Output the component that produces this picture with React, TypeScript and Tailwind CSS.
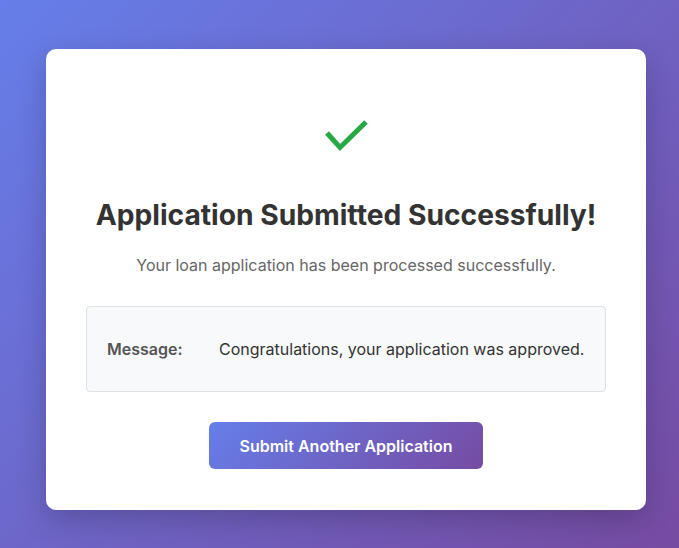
import React from "react";

export default function App() {
  return (
    <div
      className="min-h-[548px] w-full bg-[linear-gradient(135deg,#667eea_0%,#764ba2_100%)] pl-[46px] pt-[49px]"
      style={{ fontFamily: "Inter, 'Noto Sans', sans-serif" }}
    >
      <div className="w-[600px] h-[461px] bg-white rounded-[10px] shadow-[0_10px_30px_rgba(0,0,0,0.2)] px-[40px] pt-[40px] flex flex-col items-center">
        <div className="h-[89px] w-full flex justify-center pt-[31px]">
          <svg width="44" height="34" viewBox="0 0 44 34" className="ml-[2px]">
            <polyline
              points="2,13 15,27.5 41,2"
              fill="none"
              stroke="#28a745"
              strokeWidth="5"
              strokeLinecap="butt"
              strokeLinejoin="miter"
            />
          </svg>
        </div>
        <h1 className="mt-[20px] text-[28.2px] leading-[34px] font-bold text-[#333] text-center">
          Application Submitted Successfully!
        </h1>
        <p className="mt-[21px] text-[16px] leading-[24px] text-[#666] text-center">
          Your loan application has been processed successfully.
        </p>
        <div className="mt-[29px] w-[520px] h-[86px] bg-[#f8f9fa] border border-[#dee2e6] rounded-[4px] flex items-center px-[20px] text-[16px] leading-[24px]">
          <span className="w-[112px] font-semibold text-[#555]">Message:</span>
          <span className="text-[#333]">Congratulations, your application was approved.</span>
        </div>
        <button className="mt-[30px] w-[274px] h-[47px] rounded-[6px] bg-[linear-gradient(135deg,#667eea_0%,#764ba2_100%)] text-white text-[16px] font-semibold">
          Submit Another Application
        </button>
      </div>
    </div>
  );
}
